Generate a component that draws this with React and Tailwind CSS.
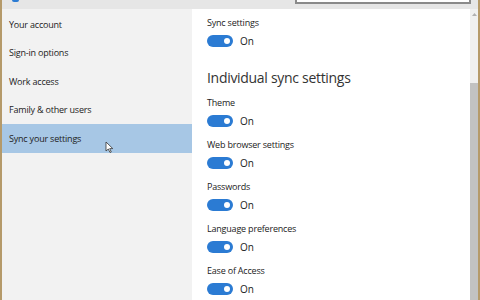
import React from "react";

const NAV = [
  "Your account",
  "Sign-in options",
  "Work access",
  "Family & other users",
  "Sync your settings",
];

const SYNC_ITEMS = [
  "Theme",
  "Web browser settings",
  "Passwords",
  "Language preferences",
  "Ease of Access",
];

function Toggle() {
  return (
    <div className="flex items-center gap-[7px] h-[12px]">
      <div className="w-[26px] h-[12px] rounded-full bg-[#2b7bd3] flex items-center justify-end pr-[3px]">
        <div className="w-[6px] h-[6px] rounded-full bg-white" />
      </div>
      <span className="text-[10px] leading-none text-[#222]">On</span>
    </div>
  );
}

function Setting({ label }) {
  return (
    <div className="flex flex-col">
      <span className="text-[9px] tracking-[-0.2px] leading-[12px] text-[#222]">{label}</span>
      <div className="mt-[6px]">
        <Toggle />
      </div>
    </div>
  );
}

export default function App() {
  return (
    <div
      className="w-[480px] h-[300px] overflow-hidden flex flex-col bg-white"
      style={{ fontFamily: '"Open Sans", "Noto Sans", sans-serif' }}
    >
      {/* title strip with the search box cut off at the top */}
      <div className="h-[9px] bg-[#e6e6e6] flex shrink-0">
        <div className="w-[2px] bg-[#b59a6a]" />
        <div className="flex-1 relative">
          <div className="absolute left-[10px] top-0 w-[7px] h-[2px] rounded-b-full bg-[#2b7bd3]" />
          <div className="absolute left-[293px] top-0 w-[176px] h-[4px] bg-white border-x-2 border-b-2 border-[#8a8a8a]" />
        </div>
        <div className="w-[2px] bg-[#b59a6a]" />
      </div>

      <div className="flex flex-1 min-h-0">
        <div className="w-[2px] bg-[#b59a6a]" />

        {/* left navigation */}
        <nav className="w-[190px] bg-[#f2f2f2] pt-[1px] flex flex-col">
          {NAV.map((item) => {
            const selected = item === "Sync your settings";
            return (
              <div
                key={item}
                className={
                  "h-[28.5px] flex items-center pl-[7px] text-[9px] tracking-[-0.2px] text-[#222] relative " +
                  (selected ? "bg-[#a7c7e5]" : "")
                }
              >
                {item}
                {selected && (
                  <svg
                    className="absolute left-[103px] top-[17px]"
                    width="9"
                    height="13"
                    viewBox="0 0 9 13"
                  >
                    <path
                      d="M1 1 L1 10 L3.3 8 L5 11.5 L6.3 11 L4.7 7.6 L7.8 7.6 Z"
                      fill="white"
                      stroke="#333"
                      strokeWidth="0.8"
                      strokeLinejoin="round"
                    />
                  </svg>
                )}
              </div>
            );
          })}
        </nav>

        {/* content */}
        <main className="flex-1 bg-white pl-[15px] pt-[8px] flex flex-col">
          <Setting label="Sync settings" />
          <h2 className="mt-[21px] text-[14px] tracking-[-0.3px] leading-[20px] text-[#333] font-normal">
            Individual sync settings
          </h2>
          <div className="mt-[9px] flex flex-col gap-[12px]">
            {SYNC_ITEMS.map((s) => (
              <Setting key={s} label={s} />
            ))}
          </div>
        </main>

        {/* scrollbar */}
        <div className="w-[8px] bg-[#f0f0f0] flex flex-col">
          <div className="h-[7px] flex items-end justify-center">
            <svg width="5" height="3" viewBox="0 0 5 3">
              <path d="M0 3 L2.5 0 L5 3 Z" fill="#b0b0b0" />
            </svg>
          </div>
          <div className="mt-[67px] flex-1 bg-[#c2c2c2]" />
        </div>
        <div className="w-[2px] bg-[#b59a6a]" />
      </div>
    </div>
  );
}
